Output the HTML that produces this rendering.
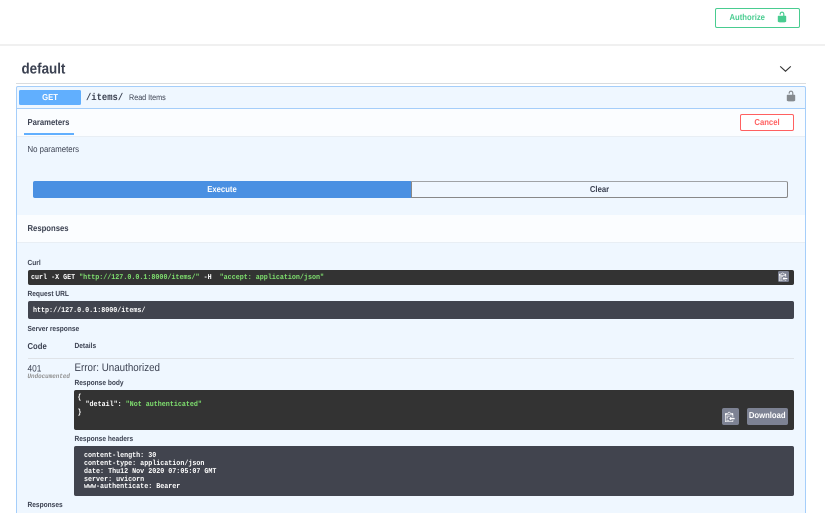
<!DOCTYPE html>
<html><head><meta charset="utf-8"><style>
html,body{margin:0;padding:0;background:#fff}
#p{position:relative;width:825px;height:513px;overflow:hidden;background:#fff;font-family:"Liberation Sans",sans-serif;color:#3b4151;text-rendering:geometricPrecision;filter:blur(.35px)}
#p div,#p svg{position:absolute;box-sizing:border-box}
.t{white-space:pre;line-height:12px;height:12px;transform:scaleY(1.12);transform-origin:50% 50%}
.b{font-weight:bold}
.m{font-family:"Liberation Mono",monospace;font-weight:bold;font-size:6.7px}
.l{font-size:6.6px;font-weight:bold;color:#3b4151}
.c{text-align:center}
</style></head><body><div id="p">
<div style="left:0;top:44px;width:825px;height:2px;background:#f0f0f0"></div>
<div style="left:715px;top:8px;width:85px;height:20px;border:1.3px solid #49cc90;border-radius:2px"></div>
<div class="t b" style="left:729.5px;top:12px;font-size:7.7px;color:#49cc90">Authorize</div>
<svg style="left:776px;top:11px" width="12" height="12" viewBox="0 0 20 20" fill="#49cc90"><path d="M15.8 8H14V5.6C14 2.703 12.665 1 10 1 7.334 1 6 2.703 6 5.6V6h2v-.801C8 3.754 8.797 3 10 3c1.203 0 2 .754 2 2.199V8H4c-.553 0-1 .646-1 1.199V17c0 .549.428 1.139.951 1.307l1.197.387C5.672 18.861 6.55 19 7.1 19h5.8c.549 0 1.428-.139 1.951-.307l1.196-.387c.524-.167.953-.757.953-1.306V9.199C17 8.646 16.352 8 15.8 8z"/></svg>
<div class="t b" style="left:21.5px;top:63px;font-size:13.4px;color:#3b4151">default</div>
<svg style="left:779px;top:64px" width="13" height="9" viewBox="0 0 13 9" fill="none" stroke="#333" stroke-width="1.1"><path d="M1.2 2.4L6.5 7.2 11.8 2.4"/></svg>
<div style="left:16px;top:83px;width:790px;height:1px;background:#d9dcdf"></div>
<div style="left:16px;top:86px;width:790px;height:440px;background:#eff7ff;border:1.3px solid #a5cefa;border-radius:2px"></div>
<div style="left:17px;top:108px;width:788px;height:1px;background:#a5cefa"></div>
<div style="left:19px;top:90px;width:62px;height:15px;background:#61affe;border-radius:1.5px"></div>
<div class="t b c" style="left:19px;top:91.5px;width:62px;font-size:7.7px;color:#fff">GET</div>
<div class="t" style="left:86px;top:91.5px;font-family:'Liberation Mono',monospace;font-weight:bold;font-size:8.85px">/items/</div>
<div class="t" style="left:129px;top:92px;font-size:7.2px">Read Items</div>
<svg style="left:785px;top:90px" width="12" height="12" viewBox="0 0 20 20" fill="#858a8f"><path d="M15.8 8H14V5.6C14 2.703 12.665 1 10 1 7.334 1 6 2.703 6 5.6V6h2v-.801C8 3.754 8.797 3 10 3c1.203 0 2 .754 2 2.199V8H4c-.553 0-1 .646-1 1.199V17c0 .549.428 1.139.951 1.307l1.197.387C5.672 18.861 6.55 19 7.1 19h5.8c.549 0 1.428-.139 1.951-.307l1.196-.387c.524-.167.953-.757.953-1.306V9.199C17 8.646 16.352 8 15.8 8z"/></svg>
<div style="left:17px;top:109px;width:788px;height:27px;background:#fbfdff"></div>
<div style="left:17px;top:136px;width:788px;height:1px;background:#e8eef4"></div>
<div class="t b" style="left:27.5px;top:116.5px;font-size:7.7px">Parameters</div>
<div style="left:23.5px;top:133px;width:50.5px;height:2px;background:#61affe"></div>
<div style="left:740px;top:114px;width:54px;height:17px;background:#fff;border:1.3px solid #ff6060;border-radius:2px"></div>
<div class="t b c" style="left:740px;top:116.5px;width:54px;font-size:7.7px;color:#ff6060">Cancel</div>
<div class="t" style="left:27.5px;top:143.5px;font-size:7.8px">No parameters</div>
<div style="left:33px;top:181px;width:378px;height:17px;background:#4a90e2;border-radius:2px 0 0 2px"></div>
<div class="t b c" style="left:33px;top:183.5px;width:378px;font-size:7.7px;color:#fff">Execute</div>
<div style="left:411px;top:181px;width:377px;height:17px;border:1.3px solid #888;border-top-color:#a0a3a6;border-radius:0 2px 2px 0"></div>
<div class="t b c" style="left:411px;top:183.5px;width:377px;font-size:7.7px">Clear</div>
<div style="left:17px;top:215px;width:788px;height:27px;background:#fbfdff"></div>
<div style="left:17px;top:242px;width:788px;height:1px;background:#e8eef4"></div>
<div class="t b" style="left:27.5px;top:223px;font-size:7.7px">Responses</div>
<div class="t l" style="left:27.5px;top:257.5px">Curl</div>
<div style="left:28px;top:270px;width:766px;height:14.5px;background:#333;border-radius:2px"></div>
<div class="t m" style="left:31px;top:271.5px;color:#fff">curl -X GET <span style="color:#7fe06f">"http://127.0.0.1:8000/items/"</span> -H  <span style="color:#7fe06f">"accept: application/json"</span></div>
<div style="left:777.5px;top:271px;width:11px;height:10.5px;background:#7d8293;border-radius:1.5px"></div>
<svg style="left:778.5px;top:271.5px" width="9.5" height="9.5" viewBox="0 0 16 16" fill="#fff"><path d="M2 13h4v1H2v-1zm5-6H2v1h5V7zm2 3V8l-3 3 3 3v-2h5v-2H9zM4.5 9H2v1h2.5V9zM2 12h2.5v-1H2v1zm9 1h1v2c-.02.28-.11.52-.3.7-.19.18-.42.28-.7.3H1c-.55 0-1-.45-1-1V4c0-.55.45-1 1-1h3c0-1.11.89-2 2-2 1.11 0 2 .89 2 2h3c.55 0 1 .45 1 1v5h-1V6H1v9h10v-2zM2 5h8c0-.55-.45-1-1-1H8c-.55 0-1-.45-1-1s-.45-1-1-1-1 .45-1 1-.45 1-1 1H3c-.55 0-1 .45-1 1z"/></svg>
<div class="t l" style="left:27.5px;top:289px">Request URL</div>
<div style="left:28px;top:301px;width:766px;height:18px;background:#41444e;border-radius:2px"></div>
<div class="t m" style="left:33px;top:304.5px;color:#fff">http://127.0.0.1:8000/items/</div>
<div class="t l" style="left:27.5px;top:323.5px">Server response</div>
<div class="t b" style="left:27.5px;top:340.5px;font-size:7.7px">Code</div>
<div class="t l" style="left:74.5px;top:341px">Details</div>
<div style="left:28px;top:358px;width:766px;height:1px;background:#dfe3e8"></div>
<div class="t" style="left:27.5px;top:362px;font-size:8.3px">401</div>
<div class="t" style="left:27.5px;top:370.5px;font-family:'Liberation Mono',monospace;font-style:italic;font-weight:bold;font-size:5.9px;color:#909090">Undocumented</div>
<div class="t" style="left:74.5px;top:363px;font-size:9.8px">Error: Unauthorized</div>
<div class="t l" style="left:74.5px;top:378px">Response body</div>
<div style="left:74px;top:390px;width:720px;height:40px;background:#333;border-radius:2px"></div>
<div class="t m" style="left:77.5px;top:391.5px;color:#fff">{</div>
<div class="t m" style="left:77.5px;top:399px;color:#fff">  "detail": <span style="color:#7fe06f">"Not authenticated"</span></div>
<div class="t m" style="left:77.5px;top:407px;color:#fff">}</div>
<div style="left:721.5px;top:407.5px;width:17px;height:17px;background:#7d8293;border-radius:2px"></div>
<svg style="left:724.5px;top:411px" width="11" height="11" viewBox="0 0 16 16" fill="#fff"><path d="M2 13h4v1H2v-1zm5-6H2v1h5V7zm2 3V8l-3 3 3 3v-2h5v-2H9zM4.5 9H2v1h2.5V9zM2 12h2.5v-1H2v1zm9 1h1v2c-.02.28-.11.52-.3.7-.19.18-.42.28-.7.3H1c-.55 0-1-.45-1-1V4c0-.55.45-1 1-1h3c0-1.11.89-2 2-2 1.11 0 2 .89 2 2h3c.55 0 1 .45 1 1v5h-1V6H1v9h10v-2zM2 5h8c0-.55-.45-1-1-1H8c-.55 0-1-.45-1-1s-.45-1-1-1-1 .45-1 1-.45 1-1 1H3c-.55 0-1 .45-1 1z"/></svg>
<div style="left:746.5px;top:407.5px;width:41.5px;height:17px;background:#7d8293;border-radius:2px"></div>
<div class="t b c" style="left:746.5px;top:410px;width:41.5px;font-size:7.7px;color:#fff">Download</div>
<div class="t l" style="left:74.5px;top:433.5px">Response headers</div>
<div style="left:74px;top:446px;width:720px;height:50px;background:#41444e;border-radius:2px"></div>
<div class="t m" style="left:84px;top:450px;color:#fff">content-length: 30</div>
<div class="t m" style="left:84px;top:458px;color:#fff">content-type: application/json</div>
<div class="t m" style="left:84px;top:466px;color:#fff">date: Thu12 Nov 2020 07:05:07 GMT</div>
<div class="t m" style="left:84px;top:473.5px;color:#fff">server: uvicorn</div>
<div class="t m" style="left:84px;top:481px;color:#fff">www-authenticate: Bearer</div>
<div class="t l" style="left:27.5px;top:500px">Responses</div>
</div></body></html>
